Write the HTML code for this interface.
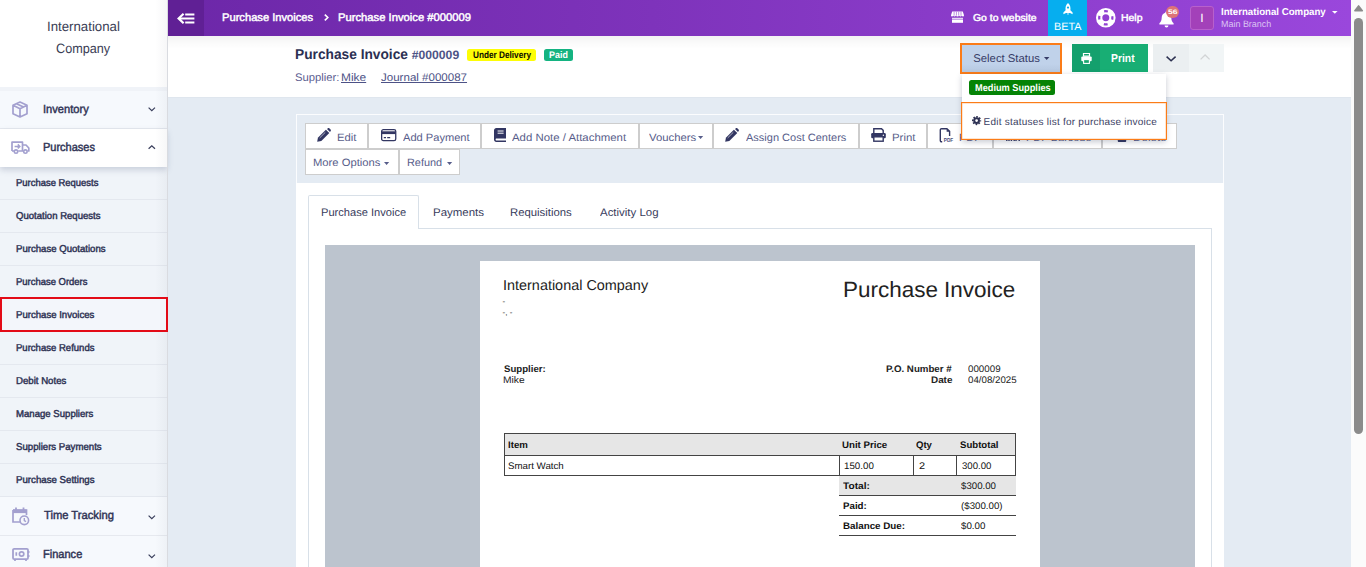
<!DOCTYPE html>
<html lang="en">
<head>
<meta charset="utf-8">
<title>Purchase Invoice #000009</title>
<style>

*{box-sizing:border-box;margin:0;padding:0}
html,body{width:1366px;height:567px;overflow:hidden;background:#e4ebf3;font-family:"Liberation Sans",sans-serif;color:#2e3254}
.t{position:absolute;white-space:pre;transform-origin:0 50%;display:block;text-rendering:geometricPrecision}
svg{position:absolute;overflow:visible}
#side,#top,#hdr,#main,#sb,#dd{position:absolute}

</style>
</head>
<body>
<div id="side">
<div style="position:absolute;left:0px;top:0px;width:167px;height:567px;background:#f5f7fb;"></div>
<div style="position:absolute;left:167px;top:0px;width:1px;height:567px;background:#d9dbe0;z-index:4;"></div>
<div style="position:absolute;left:155px;top:0px;width:12px;height:567px;background:linear-gradient(90deg,rgba(60,70,90,0),rgba(60,70,90,.045));z-index:4;"></div>
<div style="position:absolute;left:0px;top:0px;width:167px;height:86.5px;background:#fff;"></div>
<div style="position:absolute;left:0px;top:86.5px;width:167px;height:4px;background:#f0f3f8;"></div>
<span class="t" style="left:46.97px;top:20px;font:normal 13.5px/1 'Liberation Sans',sans-serif;color:#3a3d55;transform:scaleX(0.9812);">International</span>
<span class="t" style="left:56.10px;top:42px;font:normal 13.5px/1 'Liberation Sans',sans-serif;color:#3a3d55;transform:scaleX(0.9362);">Company</span>
<div style="position:absolute;left:0px;top:90.5px;width:167px;height:38.5px;background:#f6f9fd;border-bottom:1px solid #e6e9ef;"></div>
<svg style="left:12px;top:101px" width="16" height="17" viewBox="0 0 16 17"><path d="M8 1 L15 4.3 V12.7 L8 16 L1 12.7 V4.3 Z M1 4.3 L8 7.8 L15 4.3 M8 7.8 V16 M4.5 2.7 L11.5 6" fill="none" stroke="#a3a0cf" stroke-width="1.7" stroke-linejoin="round"/></svg>
<span class="t" style="left:42.70px;top:104px;font:normal 11.8px/1 'Liberation Sans',sans-serif;color:#2e3254;transform:scaleX(0.9428);-webkit-text-stroke:.45px #2e3254;">Inventory</span>
<svg style="left:147.7px;top:107.4px" width="7.6" height="4.4" viewBox="0 0 7.6 4.4"><path d="M0.6 0.6 L3.8 3.6 L7 0.6" fill="none" stroke="#3a3f5c" stroke-width="1.25"/></svg>
<div style="position:absolute;left:0px;top:128.5px;width:167px;height:38px;background:#fff;box-shadow:0 3px 6px rgba(70,80,120,.22);z-index:2;"></div>
<svg style="left:11px;top:141px;z-index:3" width="19" height="13" viewBox="0 0 19 13"><path d="M1 10 V1.2 H11.5 V10 M11.5 4 H15 L17.8 7 V10 H16.5 M3 10 H1 M7.2 10 H12.3" fill="none" stroke="#a3a0cf" stroke-width="1.7" stroke-linejoin="round"/><circle cx="5" cy="10.6" r="1.7" fill="#fff" stroke="#a3a0cf" stroke-width="1.6"/><circle cx="14.4" cy="10.6" r="1.7" fill="#fff" stroke="#a3a0cf" stroke-width="1.6"/><path d="M3.6 5.4 H8.6 M6.8 3.4 L8.8 5.4 L6.8 7.4" fill="none" stroke="#a3a0cf" stroke-width="1.5"/></svg>
<span class="t" style="left:43.14px;top:142px;font:normal 11.8px/1 'Liberation Sans',sans-serif;color:#2e3254;transform:scaleX(0.9315);z-index:3;-webkit-text-stroke:.45px #2e3254;">Purchases</span>
<div style="position:absolute;z-index:3;left:0;top:0">
<svg style="left:147.7px;top:145.2px" width="7.6" height="4.4" viewBox="0 0 7.6 4.4"><path d="M0.6 3.8 L3.8 0.8 L7 3.8" fill="none" stroke="#3a3f5c" stroke-width="1.25"/></svg>
</div>
<div style="position:absolute;left:0px;top:167px;width:167px;height:33px;background:#f0f4f9;border-bottom:1px solid #e4e8ef;"></div>
<span class="t" style="left:15.90px;top:179px;font:normal 10px/1 'Liberation Sans',sans-serif;color:#2e3254;transform:scaleX(0.9445);z-index:6;-webkit-text-stroke:.45px #2e3254;">Purchase Requests</span>
<div style="position:absolute;left:0px;top:200px;width:167px;height:33px;background:#f0f4f9;border-bottom:1px solid #e4e8ef;"></div>
<span class="t" style="left:15.90px;top:212px;font:normal 10px/1 'Liberation Sans',sans-serif;color:#2e3254;transform:scaleX(0.9564);z-index:6;-webkit-text-stroke:.45px #2e3254;">Quotation Requests</span>
<div style="position:absolute;left:0px;top:233px;width:167px;height:33px;background:#f0f4f9;border-bottom:1px solid #e4e8ef;"></div>
<span class="t" style="left:15.90px;top:245px;font:normal 10px/1 'Liberation Sans',sans-serif;color:#2e3254;transform:scaleX(0.9592);z-index:6;-webkit-text-stroke:.45px #2e3254;">Purchase Quotations</span>
<div style="position:absolute;left:0px;top:266px;width:167px;height:33px;background:#f0f4f9;border-bottom:1px solid #e4e8ef;"></div>
<span class="t" style="left:15.90px;top:278px;font:normal 10px/1 'Liberation Sans',sans-serif;color:#2e3254;transform:scaleX(0.9458);z-index:6;-webkit-text-stroke:.45px #2e3254;">Purchase Orders</span>
<div style="position:absolute;left:0px;top:297px;width:168px;height:35px;background:#f3f6fb;border:2px solid #e30b17;z-index:5;"></div>
<span class="t" style="left:15.90px;top:311px;font:normal 10px/1 'Liberation Sans',sans-serif;color:#2e3254;transform:scaleX(0.9593);z-index:6;-webkit-text-stroke:.45px #2e3254;">Purchase Invoices</span>
<div style="position:absolute;left:0px;top:332px;width:167px;height:33px;background:#f0f4f9;border-bottom:1px solid #e4e8ef;"></div>
<span class="t" style="left:15.90px;top:344px;font:normal 10px/1 'Liberation Sans',sans-serif;color:#2e3254;transform:scaleX(0.9536);z-index:6;-webkit-text-stroke:.45px #2e3254;">Purchase Refunds</span>
<div style="position:absolute;left:0px;top:365px;width:167px;height:33px;background:#f0f4f9;border-bottom:1px solid #e4e8ef;"></div>
<span class="t" style="left:15.90px;top:377px;font:normal 10px/1 'Liberation Sans',sans-serif;color:#2e3254;transform:scaleX(0.9632);z-index:6;-webkit-text-stroke:.45px #2e3254;">Debit Notes</span>
<div style="position:absolute;left:0px;top:398px;width:167px;height:33px;background:#f0f4f9;border-bottom:1px solid #e4e8ef;"></div>
<span class="t" style="left:15.90px;top:410px;font:normal 10px/1 'Liberation Sans',sans-serif;color:#2e3254;transform:scaleX(0.9593);z-index:6;-webkit-text-stroke:.45px #2e3254;">Manage Suppliers</span>
<div style="position:absolute;left:0px;top:431px;width:167px;height:33px;background:#f0f4f9;border-bottom:1px solid #e4e8ef;"></div>
<span class="t" style="left:15.90px;top:443px;font:normal 10px/1 'Liberation Sans',sans-serif;color:#2e3254;transform:scaleX(0.9633);z-index:6;-webkit-text-stroke:.45px #2e3254;">Suppliers Payments</span>
<div style="position:absolute;left:0px;top:464px;width:167px;height:33px;background:#f0f4f9;border-bottom:1px solid #e4e8ef;"></div>
<span class="t" style="left:15.90px;top:476px;font:normal 10px/1 'Liberation Sans',sans-serif;color:#2e3254;transform:scaleX(0.9681);z-index:6;-webkit-text-stroke:.45px #2e3254;">Purchase Settings</span>
<div style="position:absolute;left:0px;top:497px;width:167px;height:39px;background:#f6f9fd;border-bottom:1px solid #e6e9ef;"></div>
<svg style="left:12px;top:507px" width="18" height="19" viewBox="0 0 18 19"><path d="M1 3 H14.5 V8 M1 3 V15 H8" fill="none" stroke="#a3a0cf" stroke-width="1.7"/><rect x="1" y="2.5" width="13.5" height="3.6" fill="#a3a0cf"/><path d="M4 0.5 V3 M11.5 0.5 V3" stroke="#a3a0cf" stroke-width="1.8"/><circle cx="12.3" cy="13.3" r="4.3" fill="#f6f8fc" stroke="#a3a0cf" stroke-width="1.6"/><path d="M12.3 11 V13.5 L14 14.6" fill="none" stroke="#a3a0cf" stroke-width="1.4"/></svg>
<span class="t" style="left:43.50px;top:510px;font:normal 11.8px/1 'Liberation Sans',sans-serif;color:#2e3254;transform:scaleX(0.9488);-webkit-text-stroke:.45px #2e3254;">Time Tracking</span>
<svg style="left:147.7px;top:514.8px" width="7.6" height="4.4" viewBox="0 0 7.6 4.4"><path d="M0.6 0.6 L3.8 3.6 L7 0.6" fill="none" stroke="#3a3f5c" stroke-width="1.25"/></svg>
<div style="position:absolute;left:0px;top:536px;width:167px;height:39px;background:#f6f9fd;"></div>
<svg style="left:11.5px;top:548px" width="18" height="13" viewBox="0 0 18 13"><rect x="1" y="0.8" width="15" height="10.4" rx="1.2" fill="none" stroke="#a3a0cf" stroke-width="1.8"/><circle cx="9.6" cy="6" r="2.2" fill="none" stroke="#a3a0cf" stroke-width="1.7"/><path d="M4.3 4.3 V7.7 M16.6 3 V5 M16.6 7 V9 M3 11.5 V13 M14 11.5 V13" stroke="#a3a0cf" stroke-width="1.7"/></svg>
<span class="t" style="left:43.14px;top:549px;font:normal 11.8px/1 'Liberation Sans',sans-serif;color:#2e3254;transform:scaleX(0.9357);-webkit-text-stroke:.45px #2e3254;">Finance</span>
<svg style="left:147.7px;top:553.8px" width="7.6" height="4.4" viewBox="0 0 7.6 4.4"><path d="M0.6 0.6 L3.8 3.6 L7 0.6" fill="none" stroke="#3a3f5c" stroke-width="1.25"/></svg>
</div>
<div id="main">
<div style="position:absolute;left:296px;top:114px;width:928px;height:70px;background:#e4ebf3;border:1px solid #fbfcfe;"></div>
<div style="position:absolute;left:305px;top:123px;width:63px;height:26px;background:#fff;border:1px solid #cdcdcd;"></div>
<div style="position:absolute;left:368px;top:123px;width:113px;height:26px;background:#fff;border:1px solid #cdcdcd;"></div>
<div style="position:absolute;left:481px;top:123px;width:158px;height:26px;background:#fff;border:1px solid #cdcdcd;"></div>
<div style="position:absolute;left:639px;top:123px;width:74px;height:26px;background:#fff;border:1px solid #cdcdcd;"></div>
<div style="position:absolute;left:713px;top:123px;width:146px;height:26px;background:#fff;border:1px solid #cdcdcd;"></div>
<div style="position:absolute;left:859px;top:123px;width:68px;height:26px;background:#fff;border:1px solid #cdcdcd;"></div>
<div style="position:absolute;left:927px;top:123px;width:66px;height:26px;background:#fff;border:1px solid #cdcdcd;"></div>
<div style="position:absolute;left:993px;top:123px;width:109px;height:26px;background:#fff;border:1px solid #cdcdcd;"></div>
<div style="position:absolute;left:1102px;top:123px;width:75px;height:26px;background:#fff;border:1px solid #cdcdcd;"></div>
<div style="position:absolute;left:305px;top:149px;width:94px;height:26px;background:#fff;border:1px solid #cdcdcd;"></div>
<div style="position:absolute;left:399px;top:149px;width:61px;height:26px;background:#fff;border:1px solid #cdcdcd;"></div>
<svg style="left:316.8px;top:127.5px" width="14" height="14" viewBox="0 0 14 14"><path d="M0.2 13.8 L0.9 9.7 L8.9 1.7 L12.3 5.1 L4.3 13.1 Z" fill="#323662"/><path d="M10 1 L10.9 0.3 C11.4 -0.1 12 -0.1 12.5 0.4 L13.6 1.5 C14.1 2 14.1 2.6 13.7 3.1 L13 4 Z" fill="#323662"/><path d="M2.7 9.9 L8.3 4.3" stroke="#fff" stroke-width="0.6"/></svg>
<span class="t" style="left:337.00px;top:133px;font:normal 10.6px/1 'Liberation Sans',sans-serif;color:#575d8a;transform:scaleX(1.0683);">Edit</span>
<svg style="left:380.6px;top:128.6px" width="15.4" height="12.3" viewBox="0 0 15.4 12.3"><rect x="0.65" y="0.65" width="14.1" height="11" rx="1.7" fill="#fff" stroke="#323662" stroke-width="1.3"/><rect x="0.65" y="2.3" width="14.1" height="2.8" fill="#323662"/><path d="M2.8 8.6 H5 M6.2 8.6 H9.2" stroke="#323662" stroke-width="1.2"/></svg>
<span class="t" style="left:402.93px;top:133px;font:normal 10.6px/1 'Liberation Sans',sans-serif;color:#575d8a;transform:scaleX(1.0470);">Add Payment</span>
<svg style="left:493.6px;top:127.6px" width="12" height="14" viewBox="0 0 12 14"><path d="M2.4 0 H12 V10.4 H2.6 C1.8 10.4 1.6 11 1.6 11.4 C1.6 11.9 1.9 12.4 2.6 12.4 H12 V14 H2.4 C1 14 0 12.9 0 11.6 V2.4 C0 1 1 0 2.4 0 Z" fill="#323662"/><path d="M3.6 3 H9.6 M3.6 5.2 H9.6" stroke="#fff" stroke-width="1"/></svg>
<span class="t" style="left:512.43px;top:133px;font:normal 10.6px/1 'Liberation Sans',sans-serif;color:#575d8a;transform:scaleX(1.0765);">Add Note / Attachment</span>
<span class="t" style="left:648.71px;top:133px;font:normal 10.6px/1 'Liberation Sans',sans-serif;color:#575d8a;transform:scaleX(1.0687);">Vouchers</span>
<svg style="left:698.4px;top:136px" width="5.2" height="3" viewBox="0 0 5.2 3"><path d="M0 0 H5.2 L2.6 3 Z" fill="#575d8a"/></svg>
<svg style="left:725.4px;top:127.5px" width="14" height="14" viewBox="0 0 14 14"><path d="M0.2 13.8 L0.9 9.7 L8.9 1.7 L12.3 5.1 L4.3 13.1 Z" fill="#323662"/><path d="M10 1 L10.9 0.3 C11.4 -0.1 12 -0.1 12.5 0.4 L13.6 1.5 C14.1 2 14.1 2.6 13.7 3.1 L13 4 Z" fill="#323662"/><path d="M2.7 9.9 L8.3 4.3" stroke="#fff" stroke-width="0.6"/></svg>
<span class="t" style="left:746.43px;top:133px;font:normal 10.6px/1 'Liberation Sans',sans-serif;color:#575d8a;transform:scaleX(1.0389);">Assign Cost Centers</span>
<svg style="left:871px;top:127.8px" width="15" height="14" viewBox="0 0 15 14"><path d="M2.8 5.4 V0.8 H10.5 L12.2 2.4 V5.4" fill="#fff" stroke="#323662" stroke-width="1.4"/><rect x="0.2" y="5" width="14.6" height="5.3" rx="1.3" fill="#323662"/><rect x="2.8" y="8.8" width="9.4" height="4.4" fill="#fff" stroke="#323662" stroke-width="1.4"/><circle cx="12.4" cy="7.2" r="0.75" fill="#fff"/></svg>
<span class="t" style="left:891.80px;top:133px;font:normal 10.6px/1 'Liberation Sans',sans-serif;color:#575d8a;transform:scaleX(1.0756);">Print</span>
<svg style="left:939px;top:127.6px" width="15" height="15" viewBox="0 0 15 15"><path d="M3.2 13.8 H2.6 C1.8 13.8 1.3 13.3 1.3 12.5 V2 C1.3 1.2 1.8 0.7 2.6 0.7 H7.9 L10.6 3.4 V8" fill="none" stroke="#323662" stroke-width="1.4"/><path d="M7.6 0.9 V3.8 H10.4 Z" fill="#323662"/><text x="4.8" y="14.1" font-family="Liberation Sans,sans-serif" font-size="6.2" font-weight="bold" fill="#4a4f7c" textLength="9.4" lengthAdjust="spacingAndGlyphs">PDF</text></svg>
<span class="t" style="left:958.50px;top:133px;font:normal 10.6px/1 'Liberation Sans',sans-serif;color:#575d8a;transform:scaleX(1.0394);">PDF</span>
<svg style="left:1006px;top:128.5px" width="15" height="12" viewBox="0 0 15 12"><path d="M0.8 0 V12 M3 0 V12 M5.4 0 V12 M8.2 0 V12 M10 0 V12 M13.2 0 V12" stroke="#323662" stroke-width="1.4"/></svg>
<span class="t" style="left:1025.50px;top:133px;font:normal 10.6px/1 'Liberation Sans',sans-serif;color:#575d8a;transform:scaleX(1.0296);">PDF Barcode</span>
<svg style="left:1116px;top:127.8px" width="12" height="14" viewBox="0 0 12 14"><path d="M0 2.2 H12 M4 2 V0.6 H8 V2" fill="none" stroke="#323662" stroke-width="1.5"/><path d="M1.2 3.6 H10.8 L10.2 13 C10.2 13.6 9.8 14 9.2 14 H2.8 C2.2 14 1.8 13.6 1.8 13 Z" fill="#323662"/></svg>
<span class="t" style="left:1132.50px;top:133px;font:normal 10.6px/1 'Liberation Sans',sans-serif;color:#575d8a;transform:scaleX(1.1051);">Delete</span>
<span class="t" style="left:312.80px;top:158px;font:normal 10.6px/1 'Liberation Sans',sans-serif;color:#575d8a;transform:scaleX(1.0593);">More Options</span>
<svg style="left:384.2px;top:162px" width="5.2" height="3" viewBox="0 0 5.2 3"><path d="M0 0 H5.2 L2.6 3 Z" fill="#575d8a"/></svg>
<span class="t" style="left:406.90px;top:158px;font:normal 10.6px/1 'Liberation Sans',sans-serif;color:#575d8a;transform:scaleX(1.0283);">Refund</span>
<svg style="left:446.8px;top:162px" width="5.2" height="3" viewBox="0 0 5.2 3"><path d="M0 0 H5.2 L2.6 3 Z" fill="#575d8a"/></svg>
<div style="position:absolute;left:296px;top:183px;width:928px;height:390px;background:#fff;"></div>
<div style="position:absolute;left:308px;top:228px;width:904px;height:345px;border:1px solid #d8e0e8;border-bottom:0;"></div>
<div style="position:absolute;left:308px;top:195px;width:111px;height:34px;background:#fff;border:1px solid #d8e0e8;border-bottom:0;border-radius:2px 2px 0 0;"></div>
<span class="t" style="left:320.80px;top:208px;font:normal 11px/1 'Liberation Sans',sans-serif;color:#383c5c;transform:scaleX(1.0090);">Purchase Invoice</span>
<span class="t" style="left:433.00px;top:208px;font:normal 11px/1 'Liberation Sans',sans-serif;color:#383c5c;transform:scaleX(1.0425);">Payments</span>
<span class="t" style="left:510.40px;top:208px;font:normal 11px/1 'Liberation Sans',sans-serif;color:#383c5c;transform:scaleX(1.0289);">Requisitions</span>
<span class="t" style="left:600.12px;top:208px;font:normal 11px/1 'Liberation Sans',sans-serif;color:#383c5c;transform:scaleX(1.0405);">Activity Log</span>
<div style="position:absolute;left:325px;top:245px;width:870px;height:330px;background:#bcc4ce;"></div>
<div style="position:absolute;left:480.2px;top:261px;width:559.8px;height:320px;background:#fff;"></div>
<span class="t" style="left:502.89px;top:279px;font:normal 14.3px/1 'Liberation Sans',sans-serif;color:#222;transform:scaleX(1.0087);">International Company</span>
<span class="t" style="left:502.55px;top:298px;font:normal 8px/1 'Liberation Sans',sans-serif;color:#222;">-</span>
<span class="t" style="left:502.55px;top:309px;font:normal 8px/1 'Liberation Sans',sans-serif;color:#222;">-, -</span>
<span class="t" style="left:843.20px;top:279px;font:normal 22px/1 'Liberation Sans',sans-serif;color:#222;transform:scaleX(1.0209);">Purchase Invoice</span>
<span class="t" style="left:504.15px;top:365px;font:bold 9.5px/1 'Liberation Sans',sans-serif;color:#222;transform:scaleX(1.0122);">Supplier:</span>
<span class="t" style="left:503.00px;top:376px;font:normal 9.5px/1 'Liberation Sans',sans-serif;color:#222;transform:scaleX(1.0816);">Mike</span>
<span class="t" style="left:886.43px;top:365px;font:bold 9.5px/1 'Liberation Sans',sans-serif;color:#222;transform:scaleX(1.0220);">P.O. Number #</span>
<span class="t" style="left:931.00px;top:376px;font:bold 9.5px/1 'Liberation Sans',sans-serif;color:#222;transform:scaleX(1.0393);">Date</span>
<span class="t" style="left:967.63px;top:365px;font:normal 9.5px/1 'Liberation Sans',sans-serif;color:#222;transform:scaleX(1.0284);">000009</span>
<span class="t" style="left:967.63px;top:376px;font:normal 9.5px/1 'Liberation Sans',sans-serif;color:#222;transform:scaleX(1.0219);">04/08/2025</span>
<div style="position:absolute;left:504px;top:433px;width:512px;height:23px;background:#e6e6e6;border:1px solid #444;"></div>
<div style="position:absolute;left:504px;top:455px;width:512px;height:21px;background:#fff;border:1px solid #444;"></div>
<div style="position:absolute;left:839px;top:455px;width:1px;height:21px;background:#444;"></div>
<div style="position:absolute;left:913px;top:455px;width:1px;height:21px;background:#444;"></div>
<div style="position:absolute;left:956px;top:455px;width:1px;height:21px;background:#444;"></div>
<span class="t" style="left:507.61px;top:441px;font:bold 9.5px/1 'Liberation Sans',sans-serif;color:#111;transform:scaleX(1.0155);">Item</span>
<span class="t" style="left:841.88px;top:441px;font:bold 9.5px/1 'Liberation Sans',sans-serif;color:#111;transform:scaleX(1.0202);">Unit Price</span>
<span class="t" style="left:916.38px;top:441px;font:bold 9.5px/1 'Liberation Sans',sans-serif;color:#111;transform:scaleX(1.0065);">Qty</span>
<span class="t" style="left:959.94px;top:441px;font:bold 9.5px/1 'Liberation Sans',sans-serif;color:#111;transform:scaleX(1.0111);">Subtotal</span>
<span class="t" style="left:508.43px;top:462px;font:normal 9.5px/1 'Liberation Sans',sans-serif;color:#111;transform:scaleX(1.0220);">Smart Watch</span>
<span class="t" style="left:844.35px;top:462px;font:normal 9.5px/1 'Liberation Sans',sans-serif;color:#111;transform:scaleX(1.0272);">150.00</span>
<span class="t" style="left:919.15px;top:462px;font:normal 9.5px/1 'Liberation Sans',sans-serif;color:#111;transform:scaleX(1.1460);">2</span>
<span class="t" style="left:962.02px;top:462px;font:normal 9.5px/1 'Liberation Sans',sans-serif;color:#111;transform:scaleX(1.0139);">300.00</span>
<div style="position:absolute;left:839px;top:476px;width:177px;height:20px;background:#e6e6e6;border-bottom:1px solid #444;"></div>
<div style="position:absolute;left:839px;top:496px;width:177px;height:20px;border-bottom:1px solid #444;"></div>
<div style="position:absolute;left:839px;top:516px;width:177px;height:20px;border-bottom:1px solid #444;"></div>
<span class="t" style="left:843.18px;top:482px;font:bold 9.5px/1 'Liberation Sans',sans-serif;color:#111;transform:scaleX(1.0671);">Total:</span>
<span class="t" style="left:961.00px;top:482px;font:normal 9.5px/1 'Liberation Sans',sans-serif;color:#111;transform:scaleX(1.0195);">$300.00</span>
<span class="t" style="left:843.13px;top:502px;font:bold 9.5px/1 'Liberation Sans',sans-serif;color:#111;transform:scaleX(1.0250);">Paid:</span>
<span class="t" style="left:960.72px;top:502px;font:normal 9.5px/1 'Liberation Sans',sans-serif;color:#111;transform:scaleX(1.0212);">($300.00)</span>
<span class="t" style="left:843.11px;top:522px;font:bold 9.5px/1 'Liberation Sans',sans-serif;color:#111;transform:scaleX(1.0310);">Balance Due:</span>
<span class="t" style="left:961.01px;top:522px;font:normal 9.5px/1 'Liberation Sans',sans-serif;color:#111;transform:scaleX(1.0291);">$0.00</span>
</div>
<div id="hdr">
<div style="position:absolute;left:168px;top:36px;width:1183px;height:61px;background:#fff;"></div>
<div style="position:absolute;left:168px;top:97px;width:1183px;height:1px;background:#dfe6ee;"></div>
<div style="position:absolute;left:168px;top:36px;width:1183px;height:13px;background:linear-gradient(180deg,rgba(0,0,0,.05),rgba(0,0,0,.02) 50%,rgba(0,0,0,0));"></div>
<span class="t" style="left:294.50px;top:48px;font:bold 14.2px/1 'Liberation Sans',sans-serif;color:#2b2f52;transform:scaleX(0.9678);">Purchase Invoice</span>
<span class="t" style="left:411.72px;top:49px;font:bold 12.2px/1 'Liberation Sans',sans-serif;color:#4e5486;">#000009</span>
<div style="position:absolute;left:467px;top:49px;width:69px;height:12px;background:#fdfd06;border-radius:2.5px;"></div>
<span class="t" style="left:472.80px;top:51px;font:bold 9.6px/1 'Liberation Sans',sans-serif;color:#0a0a00;transform:scaleX(0.8565);">Under Delivery</span>
<div style="position:absolute;left:544px;top:49px;width:29px;height:12px;background:#14b381;border-radius:2.5px;"></div>
<span class="t" style="left:549.08px;top:51px;font:bold 9.6px/1 'Liberation Sans',sans-serif;color:#fff;transform:scaleX(0.9311);">Paid</span>
<span class="t" style="left:294.98px;top:73px;font:normal 11px/1 'Liberation Sans',sans-serif;color:#5b6091;transform:scaleX(1.0245);">Supplier:</span>
<span class="t" style="left:340.60px;top:73px;font:normal 11px/1 'Liberation Sans',sans-serif;color:#4d5286;transform:scaleX(1.0837);text-decoration:underline;">Mike</span>
<span class="t" style="left:381.28px;top:73px;font:normal 11px/1 'Liberation Sans',sans-serif;color:#4d5286;transform:scaleX(1.0496);text-decoration:underline;">Journal #000087</span>
<div style="position:absolute;left:960px;top:43px;width:102px;height:31px;background:linear-gradient(180deg,#c0d2ea 70%,#b6c8e0 100%);border:2px solid #fb7c18;"></div>
<span class="t" style="left:973.28px;top:54px;font:normal 11.3px/1 'Liberation Sans',sans-serif;color:#363b66;">Select Status</span>
<svg style="left:1043.5px;top:57px" width="5.4" height="3" viewBox="0 0 6.4 3.4"><path d="M0 0 H6.4 L3.2 3.4 Z" fill="#363b66"/></svg>
<div style="position:absolute;left:1072px;top:44px;width:28px;height:28px;background:#14a06d;"></div>
<div style="position:absolute;left:1100px;top:44px;width:48px;height:28px;background:#18ae74;"></div>
<svg style="left:1080.5px;top:52.5px" width="11" height="11" viewBox="0 0 11 11"><path d="M2.5 0.5 H8.5 V3.2 H2.5 Z" fill="none" stroke="#fff" stroke-width="1.2"/><rect x="0.3" y="3.6" width="10.4" height="4.6" rx="1" fill="#fff"/><rect x="2.6" y="6.6" width="5.8" height="3.8" fill="#18a66e" stroke="#fff" stroke-width="1.1"/></svg>
<span class="t" style="left:1111.39px;top:54px;font:bold 11.5px/1 'Liberation Sans',sans-serif;color:#fff;transform:scaleX(0.9003);">Print</span>
<div style="position:absolute;left:1153px;top:44px;width:36px;height:28px;background:#ebeff1;"></div>
<div style="position:absolute;left:1189px;top:44px;width:35px;height:28px;background:#f1f5f6;"></div>
<svg style="left:1165.8px;top:55.5px" width="10.2" height="5.8" viewBox="0 0 10.2 5.8"><path d="M0.6 0.6 L5.1 4.8 L9.6 0.6" fill="none" stroke="#2c3050" stroke-width="1.5"/></svg>
<svg style="left:1200.4px;top:54.2px" width="10.2" height="5.8" viewBox="0 0 10.2 5.8"><path d="M0.6 5.4 L5.1 1 L9.6 5.4" fill="none" stroke="#d2d4d6" stroke-width="1.3"/></svg>
</div>
<div id="top">
<div style="position:absolute;left:168px;top:0px;width:1183px;height:36px;background:linear-gradient(90deg,#6c27a8 0%,#7e33bb 41%,#9a47dc 100%);"></div>
<div style="position:absolute;left:168px;top:0px;width:36px;height:36px;background:#602095;"></div>
<svg style="left:176.6px;top:12.9px" width="17.4" height="11" viewBox="0 0 17.4 11"><path d="M8.2 1.5 H17.4 M2 5.4 H17.4 M8.2 9.5 H17.4" stroke="#fff" stroke-width="2" fill="none"/><path d="M6.6 0.7 L1.6 5.4 L6.6 10.3" stroke="#fff" stroke-width="2.2" fill="none"/></svg>
<span class="t" style="left:221.94px;top:13px;font:normal 11px/1 'Liberation Sans',sans-serif;color:#fff;transform:scaleX(1.0137);-webkit-text-stroke:.45px #fff;">Purchase Invoices</span>
<svg style="left:323.6px;top:14px" width="5" height="7" viewBox="0 0 5 7"><path d="M0.8 0.6 L3.8 3.5 L0.8 6.4" fill="none" stroke="#fff" stroke-width="1.6"/></svg>
<span class="t" style="left:337.94px;top:13px;font:normal 11px/1 'Liberation Sans',sans-serif;color:#fff;transform:scaleX(1.0210);-webkit-text-stroke:.45px #fff;">Purchase Invoice #000009</span>
<svg style="left:950.5px;top:11px" width="13" height="12" viewBox="0 0 13 12"><path d="M1.2 0.5 H11.8 L13 4.2 C13 5.6 11.4 5.8 10.8 4.8 C10.2 5.9 8.8 5.9 8.2 4.8 C7.6 5.9 5.4 5.9 4.8 4.8 C4.2 5.9 2.8 5.9 2.2 4.8 C1.6 5.8 0 5.6 0 4.2 Z" fill="#fff"/><path d="M3.1 0.8 V4.6 M5.4 0.8 V4.6 M7.7 0.8 V4.6 M10 0.8 V4.6" stroke="#8c3fcb" stroke-width="0.6"/><path d="M1 6.8 H12 V11.8 H1 Z" fill="#fff"/><path d="M1 8.2 H12" stroke="#8c3fcb" stroke-width="0.7"/></svg>
<span class="t" style="left:972.83px;top:14px;font:normal 10px/1 'Liberation Sans',sans-serif;color:#fff;transform:scaleX(1.0403);-webkit-text-stroke:.45px #fff;">Go to website</span>
<div style="position:absolute;left:1048px;top:0px;width:39px;height:36px;background:#06aeef;"></div>
<svg style="left:1062.5px;top:3px" width="10" height="12" viewBox="0 0 10 12"><path d="M5 0 C7.2 1.8 7.8 4.5 7.4 7.2 L9.6 9.6 V11.2 L7 10 H3 L0.4 11.2 V9.6 L2.6 7.2 C2.2 4.5 2.8 1.8 5 0 Z" fill="#fff"/><circle cx="5" cy="4.6" r="1.1" fill="#06aeef"/><path d="M4 10.4 L5 12 L6 10.4 Z" fill="#fff"/></svg>
<span class="t" style="left:1053.60px;top:22px;font:normal 10.6px/1 'Liberation Sans',sans-serif;color:#fff;transform:scaleX(1.0183);">BETA</span>
<svg style="left:1096px;top:7.8px" width="19.6" height="19.6" viewBox="0 0 19.6 19.6"><circle cx="9.8" cy="9.8" r="6.65" fill="none" stroke="#fff" stroke-width="6.3"/><circle cx="9.8" cy="9.8" r="6.6" fill="none" stroke="#9042d3" stroke-width="2.2" stroke-dasharray="3.8 6.567" stroke-dashoffset="1.9"/></svg>
<span class="t" style="left:1120.60px;top:14px;font:normal 10px/1 'Liberation Sans',sans-serif;color:#fff;transform:scaleX(1.0457);-webkit-text-stroke:.45px #fff;">Help</span>
<svg style="left:1159px;top:10.5px" width="15" height="17" viewBox="0 0 15 17"><path d="M7.5 0.5 C8.2 0.5 8.7 1 8.7 1.8 C11 2.4 12.3 4.3 12.3 6.8 C12.3 9.6 13.2 11 14.6 12.2 V13.4 H0.4 V12.2 C1.8 11 2.7 9.6 2.7 6.8 C2.7 4.3 4 2.4 6.3 1.8 C6.3 1 6.8 0.5 7.5 0.5 Z" fill="#fff"/><path d="M5.6 14.4 H9.4 C9.4 15.6 8.6 16.4 7.5 16.4 C6.4 16.4 5.6 15.6 5.6 14.4 Z" fill="#fff"/></svg>
<div style="position:absolute;left:1166.3px;top:5.5px;width:12.8px;height:12.8px;background:#dd7377;border-radius:50%;"></div>
<span class="t" style="left:1167.83px;top:10px;font:bold 6.5px/1 'Liberation Sans',sans-serif;color:#fff;transform:scaleX(1.3130);">56</span>
<div style="position:absolute;left:1190px;top:5.8px;width:24px;height:24.3px;background:#a341b9;border:1px solid #b860cc;border-radius:3px;"></div>
<span class="t" style="left:1200.15px;top:12px;font:normal 12px/1 'Liberation Sans',sans-serif;color:#fff;">I</span>
<span class="t" style="left:1221.43px;top:8px;font:bold 10px/1 'Liberation Sans',sans-serif;color:#fff;transform:scaleX(0.9666);">International Company</span>
<svg style="left:1331.6px;top:11px" width="5.6" height="2.9" viewBox="0 0 6 3"><path d="M0 0 H6 L3 3 Z" fill="#fff"/></svg>
<span class="t" style="left:1221.00px;top:20px;font:normal 9.2px/1 'Liberation Sans',sans-serif;color:#dcc3f3;transform:scaleX(0.9737);">Main Branch</span>
</div>
<div id="dd">
<div style="position:absolute;left:962px;top:74px;width:204.3px;height:65.5px;background:#fff;box-shadow:0 2px 6px rgba(40,50,80,.26);"></div>
<div style="position:absolute;left:969.1px;top:80px;width:86.1px;height:15px;background:#058305;border-radius:2.5px;"></div>
<span class="t" style="left:974.57px;top:84px;font:bold 10px/1 'Liberation Sans',sans-serif;color:#fff;transform:scaleX(0.9210);">Medium Supplies</span>
<div style="position:absolute;left:961px;top:102px;width:206px;height:38px;border:1px solid #fb7c18;background:#fff;box-shadow:inset 0 0 0 .5px rgba(251,124,24,.4);"></div>
<svg style="left:971.6px;top:115.9px" width="9.2" height="9.2" viewBox="0 0 20 20"><circle cx="10" cy="10" r="5.2" fill="none" stroke="#2e3254" stroke-width="4.4"/><circle cx="10" cy="10" r="8.2" fill="none" stroke="#2e3254" stroke-width="3.6" stroke-dasharray="3.6 2.84" stroke-dashoffset="1.8"/></svg>
<span class="t" style="left:983.60px;top:118px;font:normal 10px/1 'Liberation Sans',sans-serif;color:#3a3e62;letter-spacing:0.230px;">Edit statuses list for purchase invoice</span>
</div>
<div id="sb">
<div style="position:absolute;left:1351px;top:0px;width:15px;height:567px;background:#fbfbfb;"></div>
<svg style="left:1354px;top:5px" width="9.2" height="6.6" viewBox="0 0 9.2 6.6"><path d="M4.6 0.9 L8.3 5.7 H0.9 Z" fill="#8b8b8b" stroke="#8b8b8b" stroke-width="1.6" stroke-linejoin="round"/></svg>
<div style="position:absolute;left:1354px;top:18px;width:9px;height:416px;background:#8b8b8b;border-radius:4.5px;"></div>
</div>
</body>
</html>
